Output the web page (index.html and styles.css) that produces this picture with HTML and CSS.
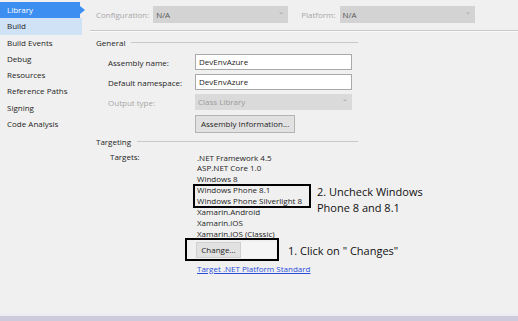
FILE: index.html
```html
<!DOCTYPE html>
<html lang="en">
<head>
    <meta charset="UTF-8">
    <title>Project Properties - Library</title>
    <link rel="stylesheet" href="styles.css">
</head>
<body>
    <div class="window">
        <div class="sidebar">
            <div class="tab selected">Library</div>
            <div class="tab hover">Build</div>
            <div class="tab">Build Events</div>
            <div class="tab">Debug</div>
            <div class="tab">Resources</div>
            <div class="tab">Reference Paths</div>
            <div class="tab">Signing</div>
            <div class="tab">Code Analysis</div>
        </div>

        <div class="main">
            <div class="topbar">
                <span class="label disabled">Configuration:</span>
                <div class="combo gray">N/A<span class="arrow">&#8964;</span></div>
                <span class="label disabled platform">Platform:</span>
                <div class="combo gray">N/A<span class="arrow">&#8964;</span></div>
            </div>

            <div class="group">
                <div class="group-title"><span>General</span><span class="rule"></span></div>
                <div class="form">
                    <label>Assembly name:</label>
                    <div class="field">DevEnvAzure</div>
                    <label>Default namespace:</label>
                    <div class="field">DevEnvAzure</div>
                    <label class="disabled">Output type:</label>
                    <div class="combo gray wide disabled-text">Class Library<span class="arrow">&#8964;</span></div>
                    <span></span>
                    <div><button class="btn">Assembly Information...</button></div>
                </div>
            </div>

            <div class="group targeting">
                <div class="group-title"><span>Targeting</span><span class="rule"></span></div>
                <div class="targets">
                    <label>Targets:</label>
                    <div class="target-col">
                        <ul class="target-list">
                            <li>.NET Framework 4.5</li>
                            <li>ASP.NET Core 1.0</li>
                            <li>Windows 8</li>
                            <li>Windows Phone 8.1</li>
                            <li>Windows Phone Silverlight 8</li>
                            <li>Xamarin.Android</li>
                            <li>Xamarin.iOS</li>
                            <li>Xamarin.iOS (Classic)</li>
                        </ul>
                        <div class="change-row"><button class="btn change">Change...</button></div>
                        <a class="link" href="#">Target .NET Platform Standard</a>

                        <div class="mark mark-phone"></div>
                        <div class="note note-phone">2. Uncheck Windows<br>Phone 8 and 8.1</div>
                        <div class="mark mark-change"></div>
                        <div class="note note-change">1. Click on " Changes"</div>
                    </div>
                </div>
            </div>
        </div>
    </div>
    <div class="statusbar"></div>
</body>
</html>
```

FILE: styles.css
```css
* {
    margin: 0;
    padding: 0;
    box-sizing: border-box;
}

body {
    width: 518px;
    height: 321px;
    overflow: hidden;
    background: #f0f0f0;
    color: #1e1e1e;
    font-family: 'Open Sans', 'Noto Sans', sans-serif;
    font-size: 8px;
    display: flex;
    flex-direction: column;
}

.window {
    flex: 1;
    display: flex;
}

/* left tabs */
.sidebar {
    width: 86px;
    padding-top: 2px;
}

.tab {
    height: 16.3px;
    line-height: 16px;
    padding-left: 7px;
    margin-right: 4px;
    position: relative;
}

.tab.selected {
    background: #3c8ef0;
    color: #fff;
    margin-right: 6px;
}

.tab.selected::after {
    content: '';
    position: absolute;
    right: -5px;
    top: 4px;
    border-left: 5px solid #3c8ef0;
    border-top: 4px solid transparent;
    border-bottom: 4px solid transparent;
}

.tab.hover {
    background: #cfe2f6;
}

/* main panel */
.main {
    flex: 1;
    padding-left: 10px;
}

.topbar {
    height: 31px;
    display: flex;
    align-items: center;
    gap: 4px;
    margin-left: -6px;
    padding-left: 6px;
    padding-bottom: 2px;
    border-bottom: 1px solid #c8c8c8;
    box-shadow: 0 1px 0 #fafafa;
}

.label.platform {
    margin-left: 9px;
}

.disabled {
    color: #a6a6a6;
}

.combo {
    position: relative;
    height: 17px;
    line-height: 17px;
    padding-left: 3px;
    width: 135px;
}

.combo.gray {
    background: #d3d3d3;
    color: #555;
}

.combo.wide {
    width: 157px;
    height: 16px;
    line-height: 16px;
    background: #dadada;
}

.disabled-text {
    color: #9a9a9a !important;
}

.arrow {
    position: absolute;
    right: 4px;
    top: -3px;
    color: #9c9c9c;
    font-size: 7px;
}

.group-title {
    display: flex;
    align-items: center;
    height: 12px;
    margin-top: 5px;
    width: 262px;
}

.group-title .rule {
    flex: 1;
    height: 1px;
    background: #c9c9c9;
    margin-left: 6px;
}

.form {
    display: grid;
    grid-template-columns: 87px 157px;
    grid-auto-rows: 16px;
    row-gap: 4.2px;
    align-items: center;
    padding-left: 12px;
    margin-top: 6px;
}

.field {
    height: 16px;
    line-height: 14px;
    background: #fff;
    border: 1px solid #a9a9a9;
    padding-left: 3px;
}

.btn {
    font-family: inherit;
    font-size: 8px;
    color: #1e1e1e;
    background: #e1e1e1;
    border: 1px solid #b4b4b4;
    height: 18px;
    padding: 0 5px;
    margin-top: 2px;
}

.targeting .group-title {
    margin-top: 5px;
}

.targets {
    display: grid;
    grid-template-columns: 87px auto;
    padding-left: 14px;
    margin-top: 4px;
}

.targets label {
    line-height: 10.9px;
}

.target-col {
    position: relative;
}

.target-list {
    list-style: none;
    padding-top: 1px;
}

.target-list li {
    height: 10.9px;
    line-height: 10.9px;
}

.change-row {
    padding-top: 2px;
    margin-left: -1px;
}

.btn.change {
    width: 45px;
    height: 16px;
    padding: 0;
    margin: 0;
    border-color: #d0d0d0;
    box-shadow: 35px 0 0 #f5f5f5;
}

.link {
    display: block;
    margin-top: 5px;
    line-height: 11px;
    color: #2b4fd8;
    text-decoration: underline;
}

/* annotations drawn on top of the screenshot */
.mark {
    position: absolute;
    border: 2.5px solid #000;
}

.mark-phone {
    left: -4px;
    top: 32px;
    width: 118px;
    height: 24px;
}

.mark-change {
    left: -12px;
    top: 86px;
    width: 94px;
    height: 23px;
}

.note {
    position: absolute;
    font-family: 'Open Sans', 'Noto Sans', sans-serif;
    font-size: 11px;
    line-height: 16px;
    color: #111;
    white-space: nowrap;
}

.note-phone {
    left: 120px;
    top: 32px;
}

.note-change {
    left: 91px;
    top: 91px;
}

.statusbar {
    height: 8px;
    border-top: 3px solid #ececf3;
    background: #cdcadb;
}
```
